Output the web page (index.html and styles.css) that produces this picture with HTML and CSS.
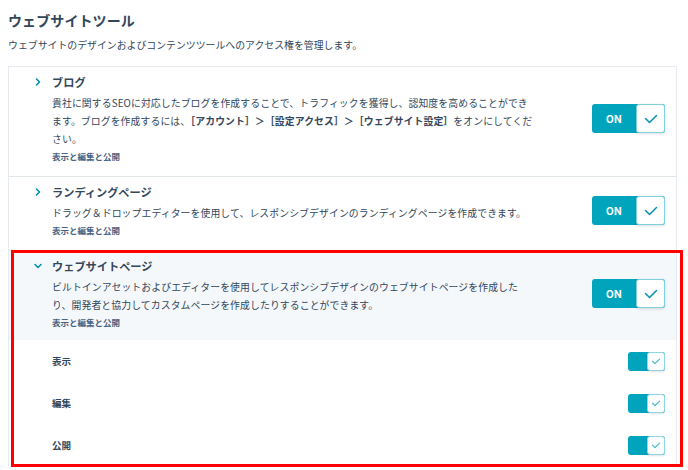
FILE: index.html
```html
<!DOCTYPE html>
<html lang="ja">
<head>
<meta charset="utf-8">
<title>ウェブサイトツール</title>
<link rel="stylesheet" href="styles.css">
</head>
<body>
  <h1 class="page-title">ウェブサイトツール</h1>
  <p class="page-sub">ウェブサイトのデザインおよびコンテンツツールへのアクセス権を管理します。</p>

  <div class="card">
    <div class="row">
      <span class="chev"><svg width="8" height="8" viewBox="0 0 8 8"><polyline points="2.5,1 5.5,4 2.5,7" fill="none" stroke="#0091ae" stroke-width="1.6" stroke-linecap="round" stroke-linejoin="round"/></svg></span>
      <div class="info">
        <div class="row-title">ブログ</div>
        <div class="desc">貴社に関するSEOに対応したブログを作成することで、トラフィックを獲得し、認知度を高めることができ<br>ます。ブログを作成するには、<b>［アカウント］＞［設定アクセス］＞［ウェブサイト設定］</b>をオンにしてくだ<br>さい。</div>
        <div class="meta">表示と編集と公開</div>
      </div>
      <div class="toggle">
        <span class="on">ON</span>
        <span class="knob"><svg width="14" height="10" viewBox="0 0 14 10"><polyline points="1.5,4.5 5.5,8.5 12.5,1.5" fill="none" stroke="#0091ae" stroke-width="1.5" stroke-linecap="round" stroke-linejoin="round"/></svg></span>
      </div>
    </div>

    <div class="row">
      <span class="chev"><svg width="8" height="8" viewBox="0 0 8 8"><polyline points="2.5,1 5.5,4 2.5,7" fill="none" stroke="#0091ae" stroke-width="1.6" stroke-linecap="round" stroke-linejoin="round"/></svg></span>
      <div class="info">
        <div class="row-title">ランディングページ</div>
        <div class="desc">ドラッグ＆ドロップエディターを使用して、レスポンシブデザインのランディングページを作成できます。</div>
        <div class="meta">表示と編集と公開</div>
      </div>
      <div class="toggle">
        <span class="on">ON</span>
        <span class="knob"><svg width="14" height="10" viewBox="0 0 14 10"><polyline points="1.5,4.5 5.5,8.5 12.5,1.5" fill="none" stroke="#0091ae" stroke-width="1.5" stroke-linecap="round" stroke-linejoin="round"/></svg></span>
      </div>
    </div>

    <div class="section open">
      <div class="row row-open">
        <span class="chev"><svg width="8" height="8" viewBox="0 0 8 8"><polyline points="1,2.5 4,5.5 7,2.5" fill="none" stroke="#0091ae" stroke-width="1.6" stroke-linecap="round" stroke-linejoin="round"/></svg></span>
        <div class="info">
          <div class="row-title">ウェブサイトページ</div>
          <div class="desc">ビルトインアセットおよびエディターを使用してレスポンシブデザインのウェブサイトページを作成した<br>り、開発者と協力してカスタムページを作成したりすることができます。</div>
          <div class="meta">表示と編集と公開</div>
        </div>
        <div class="toggle">
          <span class="on">ON</span>
          <span class="knob"><svg width="14" height="10" viewBox="0 0 14 10"><polyline points="1.5,4.5 5.5,8.5 12.5,1.5" fill="none" stroke="#0091ae" stroke-width="1.5" stroke-linecap="round" stroke-linejoin="round"/></svg></span>
        </div>
      </div>
      <div class="sub-row">
        <span class="sub-label">表示</span>
        <div class="mini-toggle"><span class="mini-on"></span><span class="mini-knob"><svg width="10" height="7" viewBox="0 0 10 7"><polyline points="1.5,3.2 4,5.6 8.6,1.2" fill="none" stroke="#3cb6cb" stroke-width="1.1" stroke-linecap="round" stroke-linejoin="round"/></svg></span></div>
      </div>
      <div class="sub-row">
        <span class="sub-label">編集</span>
        <div class="mini-toggle"><span class="mini-on"></span><span class="mini-knob"><svg width="10" height="7" viewBox="0 0 10 7"><polyline points="1.5,3.2 4,5.6 8.6,1.2" fill="none" stroke="#3cb6cb" stroke-width="1.1" stroke-linecap="round" stroke-linejoin="round"/></svg></span></div>
      </div>
      <div class="sub-row">
        <span class="sub-label">公開</span>
        <div class="mini-toggle"><span class="mini-on"></span><span class="mini-knob"><svg width="10" height="7" viewBox="0 0 10 7"><polyline points="1.5,3.2 4,5.6 8.6,1.2" fill="none" stroke="#3cb6cb" stroke-width="1.1" stroke-linecap="round" stroke-linejoin="round"/></svg></span></div>
      </div>
    </div>
  </div>

  <div class="highlight"></div>
</body>
</html>
```

FILE: styles.css
```css
* { box-sizing: border-box; }

html, body { background: #ffffff; }

body {
  margin: 0;
  padding: 8px 11px 0 8px;
  font-family: "Noto Sans CJK JP", "Noto Sans", sans-serif;
  color: #33475b;
  position: relative;
  height: 470px;
  overflow: hidden;
}

.page-title {
  margin: 0;
  font-size: 14px;
  line-height: 24px;
  font-weight: 700;
  letter-spacing: 0.1px;
  color: #33475b;
}

.page-sub {
  margin: 5px 0 0;
  font-size: 9.9px;
  line-height: 16px;
  color: #33475b;
}

.card {
  margin-top: 13px;
  border: 1px solid #e6ebf1;
  border-bottom: none;
  background: #fff;
}

.row {
  display: flex;
  align-items: center;
  padding: 6px 11px 12px 25px;
  border-bottom: 1px solid #e1e6ed;
}

.row .chev {
  align-self: flex-start;
  width: 18px;
  height: 18px;
  display: flex;
  align-items: center;
}

.info {
  flex: 1;
  min-width: 0;
}

.row-title {
  font-size: 11.2px;
  line-height: 18px;
  font-weight: 700;
  color: #33475b;
}

.desc {
  margin-top: 3px;
  font-size: 9.85px;
  line-height: 18px;
  letter-spacing: 0.1px;
  color: #33475b;
  white-space: nowrap;
}

.desc b { font-weight: 700; }

.meta {
  font-size: 8.5px;
  line-height: 16px;
  font-weight: 700;
  color: #4a6382;
}

.toggle {
  display: flex;
  width: 73px;
  height: 29px;
  border-radius: 3px;
  background: #00a4bd;
  flex-shrink: 0;
}

.toggle .on {
  width: 44px;
  display: flex;
  align-items: center;
  justify-content: center;
  font-family: "Inter", "Liberation Sans", sans-serif;
  font-size: 10px;
  font-weight: 700;
  letter-spacing: 0.4px;
  color: #ffffff;
}

.toggle .knob {
  width: 29px;
  height: 29px;
  background: #ffffff;
  border: 1px solid #7fd1de;
  border-radius: 3px;
  display: flex;
  align-items: center;
  justify-content: center;
  box-shadow: 0 1px 3px rgba(45, 62, 80, 0.18);
}

.section.open .row-open {
  background: #f5f8fa;
  border-bottom: none;
  padding-bottom: 10px;
}

.sub-row {
  height: 42px;
  display: flex;
  align-items: center;
  justify-content: space-between;
  padding: 0 11px 0 43px;
}

.sub-label {
  font-size: 9.5px;
  font-weight: 700;
  color: #33475b;
}

.mini-toggle {
  display: flex;
  width: 37px;
  height: 19px;
  border-radius: 3px;
  background: #00a4bd;
}

.mini-on { width: 19px; }

.mini-knob {
  width: 18px;
  height: 19px;
  background: #fff;
  border: 1px solid #8fd6e2;
  border-radius: 3px;
  display: flex;
  align-items: center;
  justify-content: center;
  box-shadow: 0 1px 2px rgba(45, 62, 80, 0.15);
}

.highlight {
  position: absolute;
  left: 11px;
  top: 250px;
  width: 672px;
  height: 217px;
  border: 3px solid #ff0000;
  pointer-events: none;
}
```
